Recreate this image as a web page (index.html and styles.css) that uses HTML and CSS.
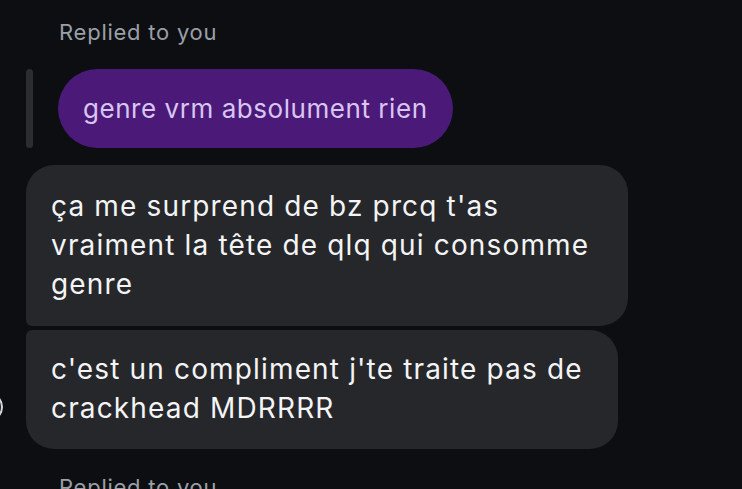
FILE: index.html
```html
<!DOCTYPE html>
<html lang="fr">
<head>
<meta charset="utf-8">
<link rel="stylesheet" href="styles.css">
</head>
<body>
<div class="thread">
  <div class="reply-label">Replied to you</div>
  <div class="quote">
    <div class="quote-bar"></div>
    <div class="quote-bubble">genre vrm absolument rien</div>
  </div>
  <div class="group">
    <div class="msg msg-first">ça me surprend de bz prcq t'as<br>vraiment la tête de qlq qui consomme<br>genre</div>
    <div class="msg-row">
      <div class="avatar"></div>
      <div class="msg msg-last">c'est un compliment j'te traite pas de<br>crackhead MDRRRR</div>
    </div>
  </div>
  <div class="reply-label next">Replied to you</div>
</div>
</body>
</html>
```
FILE: styles.css
```css
html, body {
  margin: 0;
  padding: 0;
  background: #0c0e12;
  height: 100%;
  overflow: hidden;
}
body {
  font-family: Inter, "Noto Sans", sans-serif;
  -webkit-font-smoothing: antialiased;
}
.thread {
  display: flex;
  flex-direction: column;
  padding-top: 19px;
}
.reply-label {
  margin-left: 59px;
  font-size: 22px;
  line-height: 26px;
  letter-spacing: 0.75px;
  color: #9b9fa6;
}
.quote {
  display: flex;
  align-items: stretch;
  gap: 25px;
  margin-top: 24px;
  margin-left: 26px;
}
.quote-bar {
  width: 7px;
  border-radius: 4px;
  background: #2b2d31;
}
.quote-bubble {
  height: 79px;
  display: flex;
  align-items: center;
  padding: 0 25px;
  border-radius: 40px;
  background: #4b1a79;
  color: #d9c5f2;
  font-size: 26px;
  letter-spacing: 0.55px;
}
.group {
  display: flex;
  flex-direction: column;
  gap: 4px;
  margin-top: 17px;
}
.msg {
  background: #25272b;
  color: #f4f4f5;
  font-size: 28px;
  line-height: 39px;
  padding: 22px 24px 22px 25px;
  letter-spacing: 1.15px;
  white-space: nowrap;
}
.msg-first {
  margin-left: 26px;
  width: 553px;
  border-radius: 28px 28px 28px 6px;
}
.msg-row {
  display: flex;
  align-items: center;
}
.avatar {
  width: 30px;
  height: 30px;
  border-radius: 50%;
  margin-left: -27px;
  margin-right: 23px;
  margin-top: 34px;
  border: 2px solid #d9d9d9;
  background: #1a1c20;
  box-sizing: border-box;
}
.msg-last {
  width: 543px;
  padding-top: 20px;
  padding-bottom: 21px;
  border-radius: 6px 28px 28px 28px;
}
.reply-label.next {
  margin-top: 25px;
}
```
